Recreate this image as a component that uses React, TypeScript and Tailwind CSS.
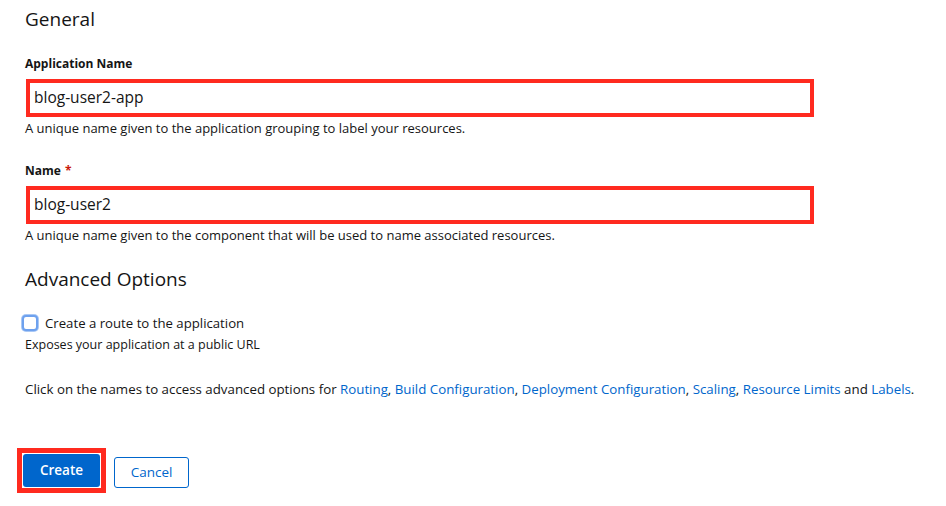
import React from 'react';

// Form field with the red annotation outline drawn around the text input
const Field: React.FC<{ label: string; required?: boolean; value: string; help: string }> = ({
  label,
  required,
  value,
  help,
}) => (
  <div className="flex flex-col">
    <label className="text-[12px] font-bold text-[#151515] leading-[16px]">
      {label}
      {required && <span className="text-[#c9190b] ml-1">*</span>}
    </label>
    <div className="mt-[7px] ml-px w-[788px] h-[38px] border-4 border-[#ff2a1f] bg-white flex items-center pl-[4px]">
      <span className="text-[15.5px] text-[#151515]">{value}</span>
    </div>
    <p className="mt-[2px] text-[13px] text-[#151515] leading-[18px]">{help}</p>
  </div>
);

const A: React.FC<{ children: React.ReactNode }> = ({ children }) => (
  <a className="text-[#0066cc] cursor-pointer">{children}</a>
);

export default function App() {
  return (
    <div
      className="w-[946px] h-[506px] bg-white pl-[25px] pt-[6px] text-[#151515]"
      style={{ fontFamily: '"Open Sans", "Liberation Sans", sans-serif' }}
    >
      <h2 className="text-[19px] leading-[26px]">General</h2>

      <div className="mt-[24px]">
        <Field
          label="Application Name"
          value="blog-user2-app"
          help="A unique name given to the application grouping to label your resources."
        />
      </div>

      <div className="mt-[26px]">
        <Field
          label="Name"
          required
          value="blog-user2"
          help="A unique name given to the component that will be used to name associated resources."
        />
      </div>

      <h2 className="mt-[22px] text-[19px] leading-[26px]">Advanced Options</h2>

      <div className="mt-[21px] flex items-center gap-[7px] -ml-[3px]">
        <span className="w-[16px] h-[16px] rounded-[4px] border-2 border-[#6ea1ee] bg-white shadow-[0_0_0_1px_#a9c8f5]" />
        <span className="text-[13.2px] leading-[20px]">Create a route to the application</span>
      </div>
      <p className="mt-[3px] text-[12.5px] leading-[18px]">Exposes your application at a public URL</p>

      <p className="mt-[25px] text-[13.3px] leading-[20px] whitespace-nowrap">
        Click on the names to access advanced options for <A>Routing</A>, <A>Build Configuration</A>,{' '}
        <A>Deployment Configuration</A>, <A>Scaling</A>, <A>Resource Limits</A> and <A>Labels</A>.
      </p>

      <div className="mt-[49px] -ml-[8px] flex items-start gap-[8px]">
        <div className="border-[5px] border-[#ff2a1f] p-px">
          <button className="h-[33px] w-[77px] rounded-[3px] bg-[#0066cc] text-white text-[13.5px] font-semibold">
            Create
          </button>
        </div>
        <button className="mt-[9px] h-[31px] w-[75px] rounded-[3px] border border-[#0066cc] text-[#0066cc] text-[13.5px] bg-white">
          Cancel
        </button>
      </div>
    </div>
  );
}
